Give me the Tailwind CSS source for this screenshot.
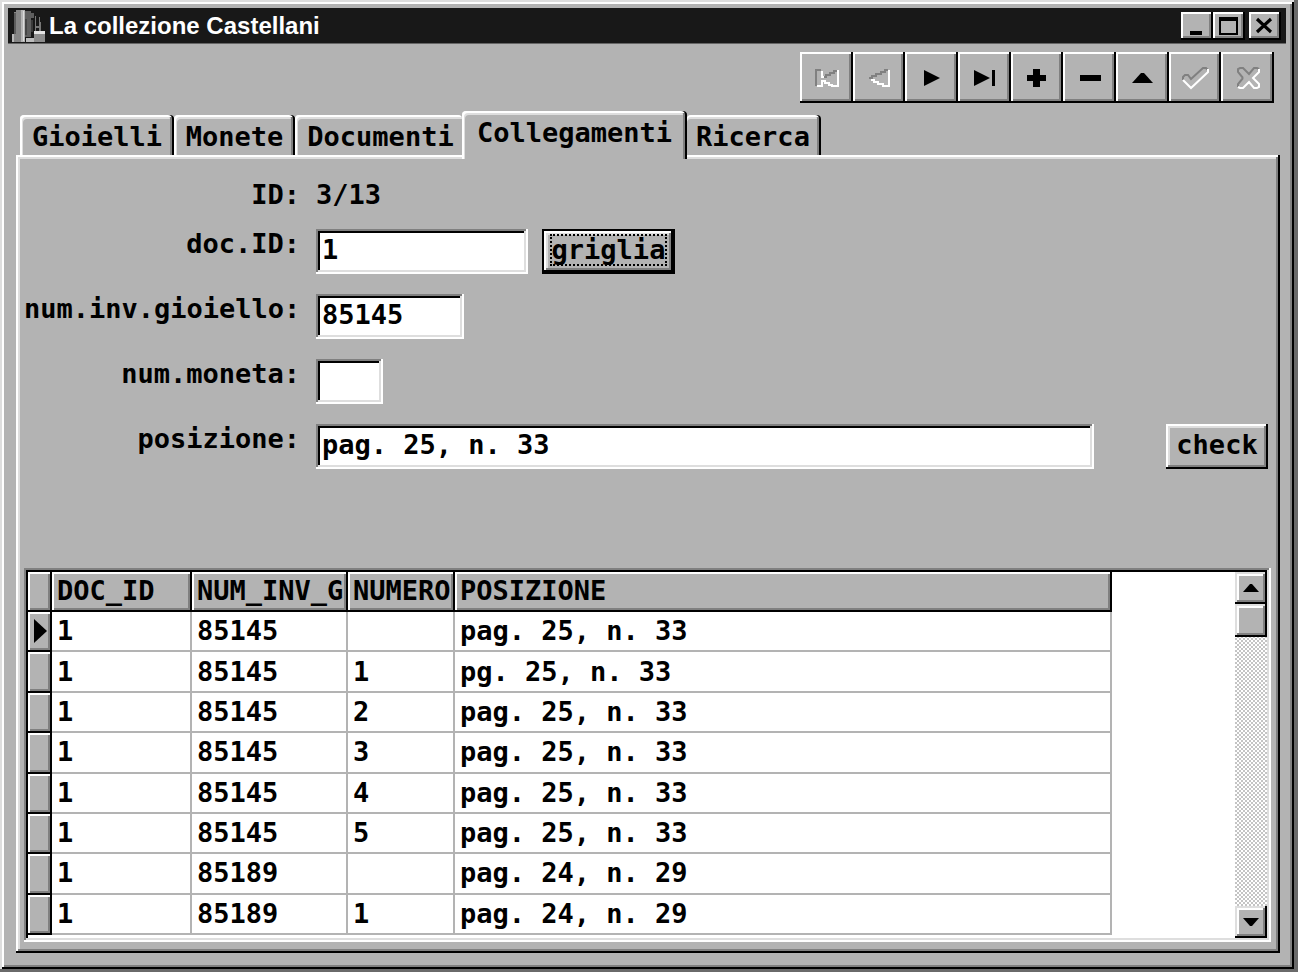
<!DOCTYPE html>
<html lang="it">
<head>
<meta charset="utf-8">
<meta name="viewport" content="width=device-width, initial-scale=1">
<title>La collezione Castellani</title>
<script src="https://cdn.jsdelivr.net/npm/@tailwindcss/browser@4"></script>
</head>
<body class="bg-[#6a6a6a] pr-1 pb-[3px] min-h-screen flex flex-col text-black">
<div class="grow flex flex-col bg-[#b3b3b3] p-2 pb-4 shadow-[inset_2px_2px_#dedede,inset_-2px_-2px_#000,inset_4px_4px_#fff,inset_-4px_-4px_#808080]">

  <!-- Title bar -->
  <header class="h-9 flex items-center bg-[#181818] pl-1 pr-[5px] border-b border-[#666]">
    <svg class="w-[34px] h-[34px] shrink-0" viewBox="0 0 34 34" aria-hidden="true">
      <path d="M2 3h2V1h8v32H0v-8h2z" fill="#858585"/>
      <path d="M0 25h2v8H0z" fill="#b8b8b8"/>
      <path d="M2 4h2v21H2z" fill="#5c5c5c"/>
      <path d="M9 1h4v32H9z" fill="#b4b4b4"/>
      <path d="M11 2h1v30h-1z" fill="#dcdcdc"/>
      <path d="M13 2h6v2h3v5h-3v19h-6z" fill="#5e5e5e"/>
      <path d="M13 10h2v16h-2z" fill="#454545"/>
      <path d="M14 29h8v4h-8z" fill="#bdbdbd"/>
      <path d="M19 11h2v12h-2z" fill="#3a3a3a"/>
      <path d="M23 7h1v15h-1zM27 8h1v5h1v9h-2zM24 17h3v2h-3z" fill="#777"/>
      <path d="M22 22h11v3H22z" fill="#e4e4e4"/>
      <path d="M22 25h11v8H22z" fill="#8d8d8d"/>
    </svg>
    <h1 class="grow pl-[3px] text-white font-bold text-2xl leading-8 whitespace-nowrap font-['Liberation_Sans',sans-serif]">La collezione Castellani</h1>
    <div class="flex">
      <button aria-label="Riduci" class="w-8 h-7 flex items-center justify-center bg-[#b3b3b3] shadow-[inset_-2px_-2px_#000,inset_2px_2px_#fff,inset_-4px_-4px_#808080]">
        <svg class="w-5 h-5" viewBox="0 0 20 20" shape-rendering="crispEdges"><path d="M3 15h12v4H3z"/></svg>
      </button>
      <button aria-label="Ingrandisci" class="w-8 h-7 flex items-center justify-center bg-[#b3b3b3] shadow-[inset_-2px_-2px_#000,inset_2px_2px_#fff,inset_-4px_-4px_#808080]">
        <svg class="w-5 h-5" viewBox="0 0 20 20" shape-rendering="crispEdges"><path fill-rule="evenodd" d="M0 1h19v18H0zM2 5v12h15V5z"/></svg>
      </button>
      <button aria-label="Chiudi" class="w-8 h-7 ml-1 flex items-center justify-center bg-[#b3b3b3] shadow-[inset_-2px_-2px_#000,inset_2px_2px_#fff,inset_-4px_-4px_#808080]">
        <svg class="w-5 h-5" viewBox="0 0 20 20"><path d="M2 3l14 13M16 3L2 16" stroke="#000" stroke-width="3.2" fill="none"/></svg>
      </button>
    </div>
  </header>

  <!-- Record navigator -->
  <div role="toolbar" aria-label="Navigazione" class="mt-2 mr-3 self-end w-[474px] h-[51px] grid grid-cols-9">
    <button disabled aria-label="Primo" class="flex items-center justify-center shadow-[inset_-2px_-2px_#000,inset_2px_2px_#fff,inset_-4px_-4px_#808080]">
      <svg class="w-[26px] h-6" viewBox="0 0 26 24" fill="none" stroke-width="2" shape-rendering="crispEdges"><path d="M3 20V4h5M11 11h2V9h4V7h4V5h3" stroke="#808080"/><path d="M4 20h5v-5h3v2h4v2h3v1h6V4M9 5v6h2" stroke="#fff"/></svg>
    </button>
    <button disabled aria-label="Precedente" class="flex items-center justify-center shadow-[inset_-2px_-2px_#000,inset_2px_2px_#fff,inset_-4px_-4px_#808080]">
      <svg class="w-[26px] h-6" viewBox="0 0 26 24" fill="none" stroke-width="2" shape-rendering="crispEdges"><path d="M3 12h3v-2h4V8h5V6h4V4h3" stroke="#808080"/><path d="M5 14h3v2h4v2h5v2h6V4" stroke="#fff"/></svg>
    </button>
    <button aria-label="Successivo" class="flex items-center justify-center shadow-[inset_-2px_-2px_#000,inset_2px_2px_#fff,inset_-4px_-4px_#808080]">
      <svg class="w-[26px] h-6" viewBox="0 0 26 24"><path d="M5 4l16 8-16 8z"/></svg>
    </button>
    <button aria-label="Ultimo" class="flex items-center justify-center shadow-[inset_-2px_-2px_#000,inset_2px_2px_#fff,inset_-4px_-4px_#808080]">
      <svg class="w-[26px] h-6" viewBox="0 0 26 24"><path d="M3 4l16 8-16 8zM21 4h3v16h-3z"/></svg>
    </button>
    <button aria-label="Inserisci" class="flex items-center justify-center shadow-[inset_-2px_-2px_#000,inset_2px_2px_#fff,inset_-4px_-4px_#808080]">
      <svg class="w-[26px] h-6" viewBox="0 0 26 24" shape-rendering="crispEdges"><path d="M9 3h7v6h6v6h-6v6H9v-6H3V9h6z"/></svg>
    </button>
    <button aria-label="Elimina" class="flex items-center justify-center shadow-[inset_-2px_-2px_#000,inset_2px_2px_#fff,inset_-4px_-4px_#808080]">
      <svg class="w-[26px] h-6" viewBox="0 0 26 24" shape-rendering="crispEdges"><path d="M3 9h21v6H3z"/></svg>
    </button>
    <button aria-label="Modifica" class="flex items-center justify-center shadow-[inset_-2px_-2px_#000,inset_2px_2px_#fff,inset_-4px_-4px_#808080]">
      <svg class="w-[26px] h-6" viewBox="0 0 26 24"><path d="M3 17L12 7h3l9 10z"/></svg>
    </button>
    <button disabled aria-label="Conferma" class="flex items-center justify-center shadow-[inset_-2px_-2px_#000,inset_2px_2px_#fff,inset_-4px_-4px_#808080]">
      <svg class="w-7 h-6" viewBox="0 0 28 24" fill="none" stroke-width="2"><path d="M2 14v-3l2-2h3l3 4L22 2h3l2 2" stroke="#808080"/><path d="M2 14l8 8L27 6V3" stroke="#fff"/></svg>
    </button>
    <button disabled aria-label="Annulla" class="flex items-center justify-center shadow-[inset_-2px_-2px_#000,inset_2px_2px_#fff,inset_-4px_-4px_#808080]">
      <svg class="w-[26px] h-6" viewBox="0 0 26 24" fill="none" stroke-width="2"><path d="M8 12L3 6V3l2-1h3l6 6 5-6h3l2 1M8 12l-5 6v3" stroke="#808080"/><path d="M24 3v3l-6 6 6 6v3l-2 1h-3l-5-6-6 6H5l-2-1" stroke="#fff"/></svg>
    </button>
  </div>

  <!-- Tabs and page -->
  <div class="grow flex flex-col mx-2 mr-[6px] mt-2 font-bold text-[27px] leading-8 font-['DejaVu_Sans_Mono',monospace]">
    <div role="tablist" class="flex items-end pl-1 h-11">
      <button role="tab" aria-selected="false" class="h-10 pt-[3px] w-[154px] rounded-t-[4px] shadow-[inset_-2px_0_#000,inset_2px_2px_#fff,inset_-4px_0_#808080,inset_3px_4px_#dedede]">Gioielli</button>
      <button role="tab" aria-selected="false" class="h-10 pt-[3px] w-[121px] rounded-t-[4px] shadow-[inset_-2px_0_#000,inset_2px_2px_#fff,inset_-4px_0_#808080,inset_3px_4px_#dedede]">Monete</button>
      <button role="tab" aria-selected="false" class="h-10 pt-[3px] pl-1 w-[167px] rounded-t-[4px] shadow-[inset_2px_2px_#fff,inset_3px_4px_#dedede]">Documenti</button>
      <button role="tab" aria-selected="true" class="relative z-10 h-[48px] -mb-1 pb-1 w-[225px] rounded-t-[4px] bg-[#b3b3b3] shadow-[inset_-2px_0_#000,inset_2px_2px_#fff,inset_-4px_0_#808080,inset_3px_4px_#dedede]">Collegamenti</button>
      <button role="tab" aria-selected="false" class="h-10 pt-[3px] pr-0.5 w-[134px] rounded-t-[4px] shadow-[inset_-2px_0_#000,inset_0_2px_#fff,inset_-4px_0_#808080,inset_0_4px_#dedede]">Ricerca</button>
    </div>

    <main role="tabpanel" class="grow flex flex-col p-2 pr-[9px] pb-[11px] shadow-[inset_-2px_-2px_#000,inset_2px_2px_#fff,inset_-4px_-4px_#808080,inset_4px_4px_#dedede]">
      <form class="flex flex-col gap-5 pt-4" onsubmit="return false">
        <div class="flex gap-4 h-[30px]">
          <span class="w-[276px] text-right">ID:</span>
          <output>3/13</output>
        </div>
        <div class="flex h-[45px]">
          <label for="doc" class="w-[276px] mr-4 text-right leading-[30px]">doc.ID:</label>
          <input id="doc" value="1" class="w-[212px] pl-1.5 pb-1 bg-white shadow-[inset_-2px_-2px_#fff,inset_2px_2px_#808080,inset_-4px_-4px_#dedede,inset_4px_4px_#000]">
          <button type="button" class="ml-3.5 w-[133px] pb-1 bg-[#b3b3b3] border-2 border-black shadow-[inset_-2px_-2px_#000,inset_2px_2px_#fff,inset_-4px_-4px_#808080,inset_4px_4px_#dedede] flex items-center justify-center"><span class="leading-7 outline-2 outline-dotted outline-black">griglia</span></button>
        </div>
        <div class="flex gap-4 h-[45px]">
          <label for="inv" class="w-[276px] text-right leading-[30px]">num.inv.gioiello:</label>
          <input id="inv" value="85145" class="w-[148px] pl-1.5 pb-1 bg-white shadow-[inset_-2px_-2px_#fff,inset_2px_2px_#808080,inset_-4px_-4px_#dedede,inset_4px_4px_#000]">
        </div>
        <div class="flex gap-4 h-[45px]">
          <label for="mon" class="w-[276px] text-right leading-[30px]">num.moneta:</label>
          <input id="mon" value="" class="w-[67px] pl-1.5 pb-1 bg-white shadow-[inset_-2px_-2px_#fff,inset_2px_2px_#808080,inset_-4px_-4px_#dedede,inset_4px_4px_#000]">
        </div>
        <div class="flex h-[45px]">
          <label for="pos" class="w-[276px] mr-4 shrink-0 text-right leading-[30px]">posizione:</label>
          <input id="pos" value="pag. 25, n. 33" class="grow min-w-0 pl-1.5 pb-1 bg-white shadow-[inset_-2px_-2px_#fff,inset_2px_2px_#808080,inset_-4px_-4px_#dedede,inset_4px_4px_#000]">
          <button type="button" class="ml-[72px] mr-[3px] w-[102px] pb-1 shadow-[inset_-2px_-2px_#000,inset_2px_2px_#fff,inset_-4px_-4px_#808080,inset_4px_4px_#dedede]">check</button>
        </div>
      </form>

      <!-- Data grid -->
      <div class="mt-auto flex bg-white p-1 shadow-[inset_-2px_-2px_#fff,inset_2px_2px_#808080,inset_-4px_-4px_#dedede,inset_4px_4px_#000]">
        <div class="grow pr-[123px] pb-[3px]">
          <table class="w-full h-[363px] table-fixed border-separate border-spacing-0 text-left leading-8 [&_td]:p-0 [&_td]:pl-[5px] [&_td]:border-r-2 [&_td]:border-b-2 [&_td]:border-[#b3b3b3] [&_thead_th]:pl-[5px] [&_th]:font-bold [&_th]:bg-[#b3b3b3] [&_th]:border-r-2 [&_th]:border-b-2 [&_th]:border-black [&_th]:shadow-[inset_2px_2px_#fff,inset_-2px_-2px_#808080]">
            <colgroup><col class="w-6"><col class="w-[140px]"><col class="w-[156px]"><col class="w-[107px]"><col></colgroup>
            <thead>
              <tr class="h-10"><th aria-label="Indicatore"></th><th scope="col">DOC_ID</th><th scope="col">NUM_INV_G</th><th scope="col">NUMERO</th><th scope="col">POSIZIONE</th></tr>
            </thead>
            <tbody>
              <tr><th aria-label="Record corrente"><svg class="w-[13px] h-6 ml-1.5" viewBox="0 0 13 24"><path d="M0 0l13 12L0 24z"/></svg></th><td>1</td><td>85145</td><td></td><td>pag. 25, n. 33</td></tr>
              <tr><th></th><td>1</td><td>85145</td><td>1</td><td>pg. 25, n. 33</td></tr>
              <tr><th></th><td>1</td><td>85145</td><td>2</td><td>pag. 25, n. 33</td></tr>
              <tr><th></th><td>1</td><td>85145</td><td>3</td><td>pag. 25, n. 33</td></tr>
              <tr><th></th><td>1</td><td>85145</td><td>4</td><td>pag. 25, n. 33</td></tr>
              <tr><th></th><td>1</td><td>85145</td><td>5</td><td>pag. 25, n. 33</td></tr>
              <tr><th></th><td>1</td><td>85189</td><td></td><td>pag. 24, n. 29</td></tr>
              <tr><th></th><td>1</td><td>85189</td><td>1</td><td>pag. 24, n. 29</td></tr>
            </tbody>
          </table>
        </div>
        <div class="w-8 shrink-0 flex flex-col bg-[repeating-conic-gradient(#c4c4c4_0_25%,#fff_0_50%)] bg-[length:4px_4px]">
          <button aria-label="Scorri su" class="h-8 flex items-center justify-center bg-[#b3b3b3] shadow-[inset_-2px_-2px_#000,inset_2px_2px_#dedede,inset_-4px_-4px_#808080,inset_4px_4px_#fff]"><svg class="w-4 h-2" viewBox="0 0 16 8"><path d="M0 8l7-8h2l7 8z"/></svg></button>
          <div class="h-[33px] bg-[#b3b3b3] shadow-[inset_-2px_-2px_#000,inset_2px_2px_#dedede,inset_-4px_-4px_#808080,inset_4px_4px_#fff]"></div>
          <button aria-label="Scorri giù" class="mt-auto h-8 flex items-center justify-center bg-[#b3b3b3] shadow-[inset_-2px_-2px_#000,inset_2px_2px_#dedede,inset_-4px_-4px_#808080,inset_4px_4px_#fff]"><svg class="w-4 h-2" viewBox="0 0 16 8"><path d="M0 0h16L9 8H7z"/></svg></button>
        </div>
      </div>
    </main>
  </div>
</div>
</body>
</html>
